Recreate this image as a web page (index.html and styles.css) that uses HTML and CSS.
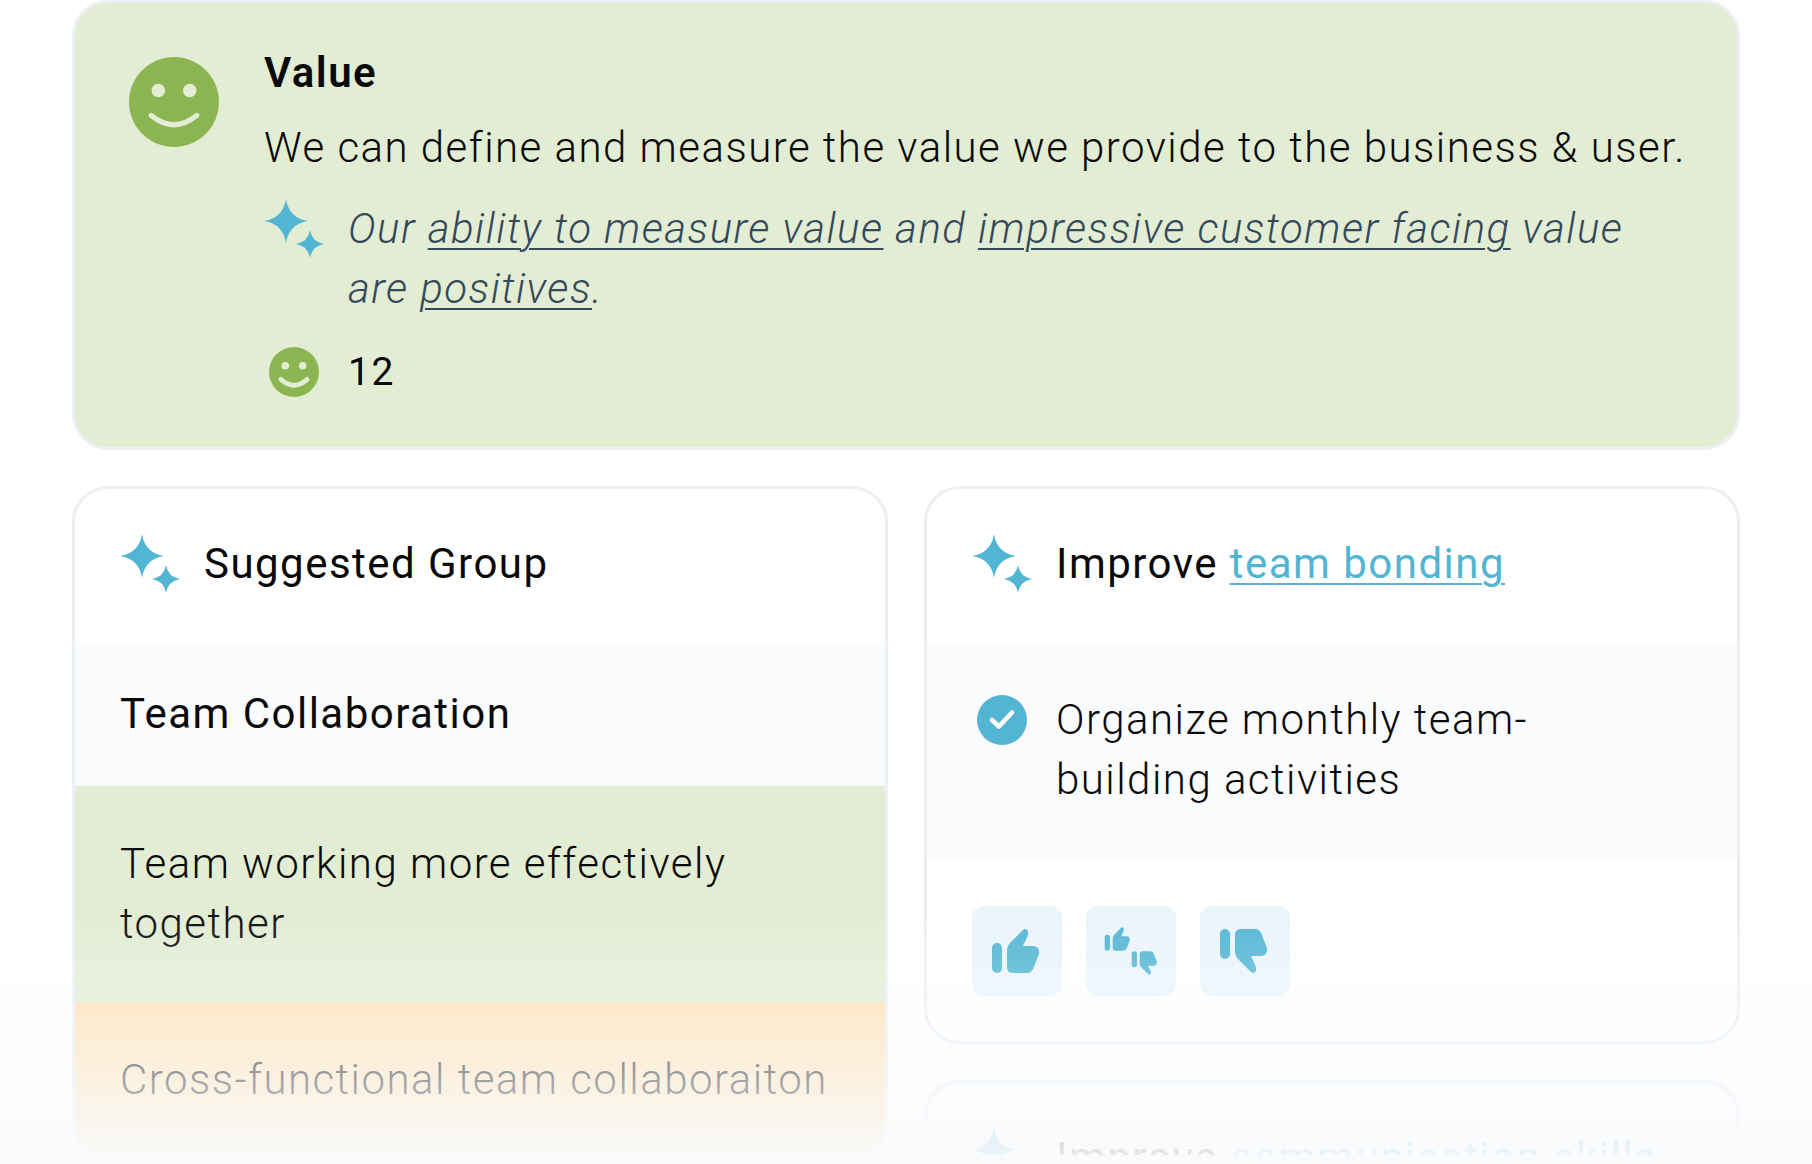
FILE: index.html
```html
<!DOCTYPE html>
<html lang="en">
<head>
<meta charset="utf-8">
<meta name="viewport" content="width=device-width, initial-scale=1">
<title>Team health summary</title>
<link rel="stylesheet" href="styles.css">
</head>
<body>
<svg class="symbols" aria-hidden="true">
  <symbol id="sparkles" viewBox="0 0 60 60">
    <path d="M22 0Q25 19 44 22Q25 25 22 44Q19 25 0 22Q19 19 22 0Z"/>
    <path d="M46 31Q48 43 60 45Q48 47 46 59Q44 47 32 45Q44 43 46 31Z"/>
  </symbol>
  <symbol id="smile" viewBox="0 0 108 108">
    <circle cx="54" cy="54" r="45"/>
    <g class="face">
      <circle cx="38.300" cy="42.500" r="6.800"/>
      <circle cx="69.700" cy="42.500" r="6.800"/>
      <path d="M31.300 67.500Q54 86 76.700 67.500" fill="none" stroke-width="5.300" stroke-linecap="round"/>
    </g>
  </symbol>
  <symbol id="smile-small" viewBox="0 0 60 60">
    <circle cx="30" cy="30" r="25"/>
    <g class="face">
      <circle cx="21.300" cy="23.700" r="3.800"/>
      <circle cx="38.700" cy="23.700" r="3.800"/>
      <path d="M17 37.500Q30 49 43 37.500" fill="none" stroke-width="5" stroke-linecap="round"/>
    </g>
  </symbol>
  <symbol id="check" viewBox="0 0 60 60">
    <circle cx="30" cy="30" r="25"/>
    <path class="tick" d="M20 30L27 36.500L40 22.500" fill="none" stroke-width="4.500" stroke-linecap="round" stroke-linejoin="round"/>
  </symbol>
  <symbol id="thumb" viewBox="0 0 60 60">
    <rect x="5" y="22" width="10" height="30" rx="5"/>
    <path d="M20 29Q20 25 23 22L35.500 9.500Q38 7 40 9Q42 11 40.500 15L36 25H46Q53 25.500 52 33L46.500 47Q44.500 52 40 52H26Q20 52 20 46Z"/>
  </symbol>
</svg>

<main class="board">
  <section class="card value">
    <svg class="icon-large green"><use href="#smile"/></svg>
    <div class="value-body">
      <h2 class="value-title">Value</h2>
      <p class="value-text">We can define and measure the value we provide to the business &amp; user.</p>
      <div class="row insight">
        <svg class="icon blue"><use href="#sparkles"/></svg>
        <p>Our <a href="#measure">ability to measure value</a> and <a href="#customer">impressive customer facing</a> value are <a href="#positives">positives</a>.</p>
      </div>
      <div class="row votes">
        <svg class="icon green"><use href="#smile-small"/></svg>
        <p>12</p>
      </div>
    </div>
  </section>

  <div class="columns">
    <div class="column">
      <section class="card">
        <header class="row card-head">
          <svg class="icon blue"><use href="#sparkles"/></svg>
          <h2>Suggested Group</h2>
        </header>
        <h3 class="group-name">Team Collaboration</h3>
        <p class="item good">Team working more effectively together</p>
        <p class="item mixed">Cross-functional team collaboraiton</p>
      </section>
    </div>
    <div class="column">
      <section class="card">
        <header class="row card-head">
          <svg class="icon blue"><use href="#sparkles"/></svg>
          <h2>Improve <a class="topic" href="#bonding">team bonding</a></h2>
        </header>
        <div class="row action">
          <svg class="icon blue"><use href="#check"/></svg>
          <p>Organize monthly team-building activities</p>
        </div>
        <div class="feedback">
          <button type="button" aria-label="Helpful"><svg class="thumb"><use href="#thumb"/></svg></button>
          <button type="button" class="both" aria-label="Partly helpful"><svg class="thumb"><use href="#thumb"/></svg><svg class="thumb down"><use href="#thumb"/></svg></button>
          <button type="button" aria-label="Not helpful"><svg class="thumb down"><use href="#thumb"/></svg></button>
        </div>
      </section>
      <section class="card">
        <header class="row card-head">
          <svg class="icon blue"><use href="#sparkles"/></svg>
          <h2>Improve <a class="topic" href="#communication">communication skills</a></h2>
        </header>
      </section>
    </div>
  </div>
</main>
<div class="fade"></div>
</body>
</html>
```

FILE: styles.css
```css
* {
  box-sizing: border-box;
  margin: 0;
}

html {
  height: 100%;
}

body {
  height: 100%;
  overflow: hidden;
  background: #fff;
  color: #0a0a0a;
  font: 300 42px/60px Roboto, "Liberation Sans", sans-serif;
  letter-spacing: 0.035em;
}

h2,
h3 {
  font-size: 42px;
  font-weight: 400;
}

a {
  text-decoration-thickness: 2px;
  text-underline-offset: 5px;
}

.symbols {
  position: absolute;
  width: 0;
  height: 0;
}

.board {
  display: flex;
  flex-direction: column;
  gap: 36px;
  padding: 0 72px;
  height: calc(100% - 9px);
  overflow: hidden;
}

.card {
  flex: none;
  border: 3px solid #ecf0f4;
  border-radius: 36px;
  background: #fff;
  overflow: hidden;
}

.value {
  display: flex;
  gap: 36px;
  padding: 45px;
  background: #e2edd4;
}

.icon-large {
  flex: none;
  width: 108px;
  height: 108px;
}

.icon {
  flex: none;
  width: 60px;
  height: 60px;
}

.green {
  fill: #8bb551;
}

.blue {
  fill: #51b5d3;
}

.face {
  fill: #e2edd4;
}

.face path {
  stroke: #e2edd4;
}

.tick {
  stroke: #fff;
}

.row {
  display: flex;
  gap: 24px;
}

.value-body {
  flex: 1;
  margin-top: -5px;
}

.value-title {
  font-weight: 600;
}

.value-text {
  margin-top: 15px;
}

.insight {
  margin-top: 21px;
  padding-right: 24px;
  color: #34495a;
  font-style: italic;
}

.insight a {
  color: inherit;
}

.votes {
  margin-top: 23px;
  font-size: 39px;
  font-weight: 400;
}

.columns {
  display: grid;
  grid-template-columns: 1fr 1fr;
  gap: 36px;
}

.column {
  display: flex;
  flex-direction: column;
  gap: 36px;
}

.card-head {
  padding: 45px 45px 48px;
}

.topic {
  color: #51b5d3;
}

.group-name {
  padding: 42px 45px;
  background: #fafbfd;
}

.item {
  padding: 48px 45px;
}

.good {
  background: #e2edd4;
}

.mixed {
  background: #ffe0b2;
}

.action {
  padding: 48px 72px 48px 45px;
  background: #fafbfd;
}

.feedback {
  display: flex;
  gap: 24px;
  padding: 48px 45px 45px;
}

button {
  display: flex;
  align-items: center;
  justify-content: center;
  width: 90px;
  height: 90px;
  padding: 0;
  border: 0;
  border-radius: 12px;
  background: #ebf5fc;
}

.thumb {
  flex: none;
  width: 60px;
  height: 60px;
  fill: #51b5d3;
}

.down {
  transform: scaleY(-1);
}

.both {
  align-items: flex-start;
  padding: 17px 0;
}

.both .thumb {
  width: 32px;
  height: 32px;
}

.both .down {
  align-self: flex-end;
  margin-left: -5px;
}

.fade {
  position: fixed;
  inset: auto 0 0;
  height: 264px;
  background: linear-gradient(rgba(249, 251, 253, 0), rgba(249, 251, 253, .2) 27%, rgba(249, 251, 253, .63) 68%, rgba(249, 251, 253, .96));
  pointer-events: none;
}
```
